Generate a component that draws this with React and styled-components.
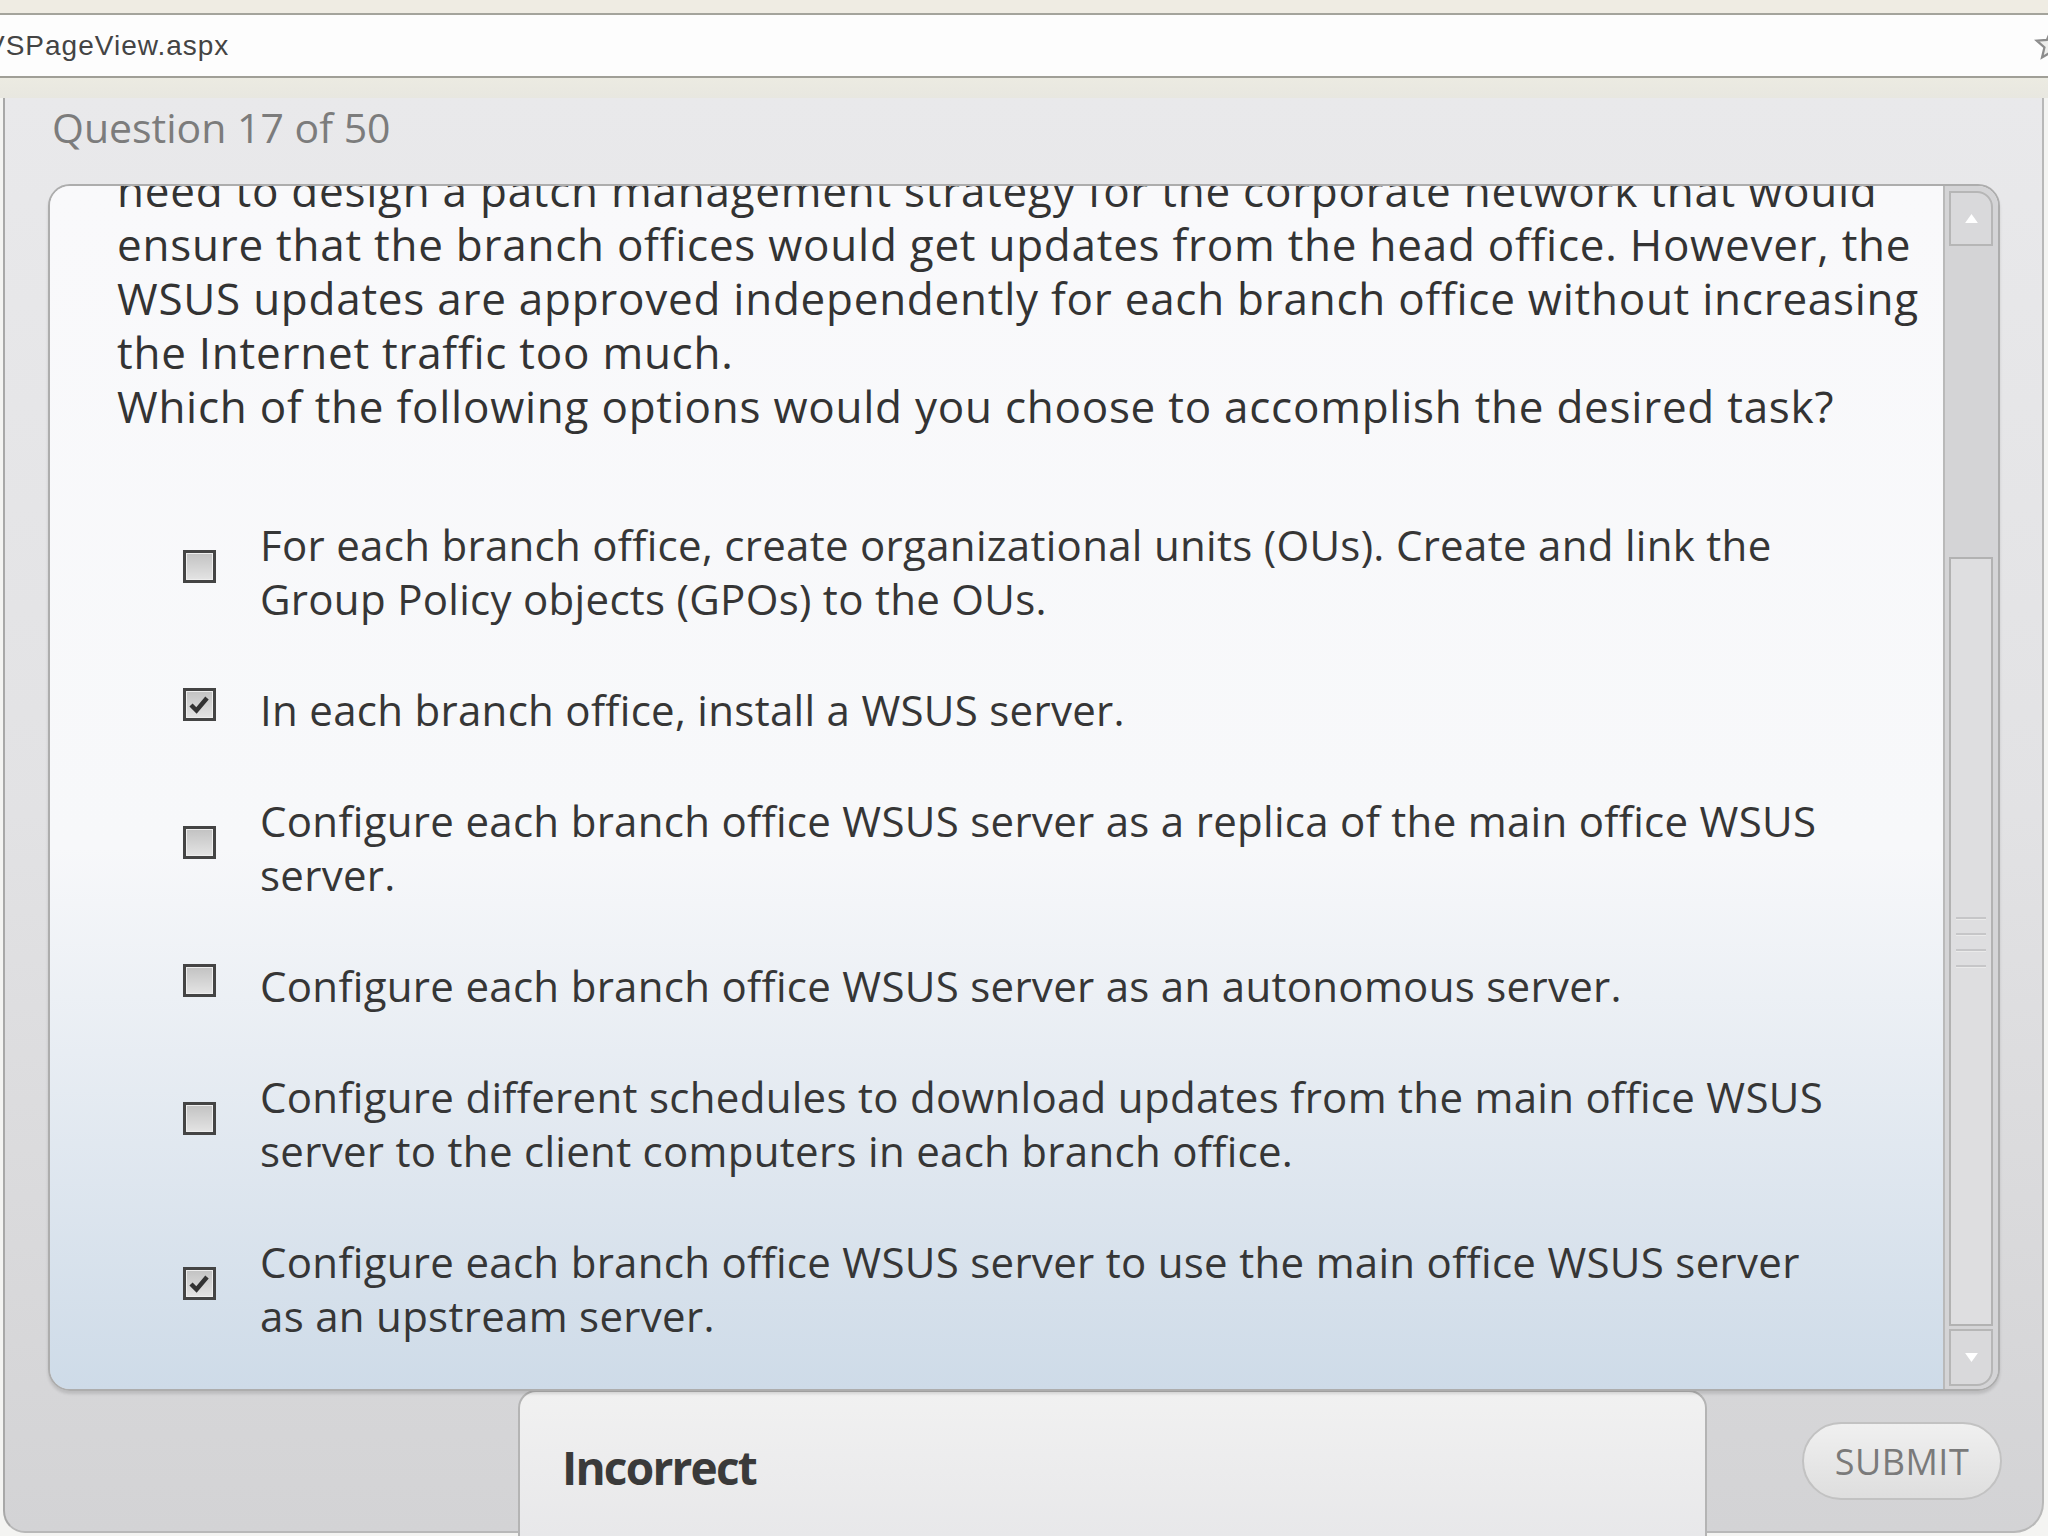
import styled, { createGlobalStyle } from "styled-components"

const GlobalStyle = createGlobalStyle`
  html, body {
    margin: 0;
    padding: 0;
    background: #efede5;
  }
  * {
    box-sizing: border-box;
  }
`

const questionLines = [
  "need to design a patch management strategy for the corporate network that would",
  "ensure that the branch offices would get updates from the head office. However, the",
  "WSUS updates are approved independently for each branch office without increasing",
  "the Internet traffic too much.",
  "Which of the following options would you choose to accomplish the desired task?",
]

const options = [
  { lines: ["For each branch office, create organizational units (OUs). Create and link the", "Group Policy objects (GPOs) to the OUs."], checked: false },
  { lines: ["In each branch office, install a WSUS server."], checked: true },
  { lines: ["Configure each branch office WSUS server as a replica of the main office WSUS", "server."], checked: false },
  { lines: ["Configure each branch office WSUS server as an autonomous server."], checked: false },
  { lines: ["Configure different schedules to download updates from the main office WSUS", "server to the client computers in each branch office."], checked: false },
  { lines: ["Configure each branch office WSUS server to use the main office WSUS server", "as an upstream server."], checked: true },
]

const App = () => {
  return (
    <>
      <GlobalStyle />
      <Page>
        <ChromeTop />
        <AddressBar>
          <Url>VSPageView.aspx</Url>
          <Star viewBox="0 0 30 28">
            <path d="M15 2 L18.6 10.4 L27.6 11 L20.8 17 L22.9 25.8 L15 21.1 L7.1 25.8 L9.2 17 L2.4 11 L11.4 10.4 Z" />
          </Star>
        </AddressBar>
        <ChromeStrip />
        <Panel>
          <Title>Question 17 of 50</Title>
          <QuestionBox>
            <Content>
              <Scrolled>
                <QuestionText>
                  {questionLines.map((l, i) => <Line key={i}>{l}</Line>)}
                </QuestionText>
                <OptionList>
                  {options.map((o, i) => (
                    <Option key={i}>
                      <Checkbox>
                        {o.checked && (
                          <svg viewBox="0 0 27 27" width="27" height="27">
                            <path d="M5 14 L10.5 19.5 L21 7" fill="none" stroke="#333" strokeWidth="4.5" />
                          </svg>
                        )}
                      </Checkbox>
                      <OptionText>
                        {o.lines.map((l, j) => <Line key={j}>{l}</Line>)}
                      </OptionText>
                    </Option>
                  ))}
                </OptionList>
              </Scrolled>
            </Content>
            <ScrollBar>
              <ArrowButton $top>
                <Arrow viewBox="0 0 16 12"><path d="M8 1 L15 11 L1 11 Z" /></Arrow>
              </ArrowButton>
              <Track $offset={311}>
                <Thumb>
                  <Grip />
                  <Grip />
                  <Grip />
                  <Grip />
                </Thumb>
              </Track>
              <ArrowButton>
                <Arrow viewBox="0 0 16 12"><path d="M1 1 L15 1 L8 11 Z" /></Arrow>
              </ArrowButton>
            </ScrollBar>
          </QuestionBox>
          <Footer>
            <Feedback>
              <FeedbackTitle>Incorrect</FeedbackTitle>
            </Feedback>
            <SubmitButton>SUBMIT</SubmitButton>
          </Footer>
        </Panel>
      </Page>
    </>
  )
}

const Page = styled.div`
  width: 2048px;
  height: 1536px;
  overflow: hidden;
  background: #f4f4f2;
  display: flex;
  flex-direction: column;
`

const ChromeTop = styled.div`
  height: 13px;
  background: #efece3;
  flex: none;
`

const AddressBar = styled.div`
  height: 65px;
  flex: none;
  background: #fdfdfd;
  border-top: 2px solid #a4a49c;
  border-bottom: 2px solid #a09f97;
  display: flex;
  align-items: center;
  overflow: hidden;
`

const Url = styled.span`
  font-family: "Liberation Sans", Arial, sans-serif;
  font-size: 28px;
  letter-spacing: 1px;
  color: #444;
  margin-left: -14px;
  flex: 1;
`

const Star = styled.svg`
  width: 34px;
  height: 32px;
  margin-right: -20px;
  margin-bottom: 4px;
  fill: #ededeb;
  stroke: #8c8c8c;
  stroke-width: 2;
`

const ChromeStrip = styled.div`
  height: 20px;
  flex: none;
  background: linear-gradient(#ecebe2, #e8e7e0);
`

const Panel = styled.div`
  margin-left: 3px;
  width: 2041px;
  height: 1435px;
  flex: none;
  border-left: 2px solid #a8a8a8;
  border-right: 2px solid #b8b8b8;
  border-bottom: 2px solid #b8b8b8;
  border-radius: 0 0 30px 22px;
  background: linear-gradient(#e9e9eb 0%, #e2e2e4 50%, #d3d3d5 100%);
  padding: 5px 0 0 43px;
  display: flex;
  flex-direction: column;
`

const Title = styled.div`
  font-family: "Open Sans", "Noto Sans", sans-serif;
  font-size: 41px;
  line-height: 48px;
  color: #7c7c7c;
  margin-left: 4px;
  flex: none;
`

const QuestionBox = styled.div`
  margin-top: 33px;
  width: 1952px;
  height: 1207px;
  flex: none;
  border: 2px solid #adadad;
  border-radius: 22px;
  display: flex;
  overflow: hidden;
  box-shadow: 0 3px 3px rgba(0, 0, 0, 0.12);
  position: relative;
  z-index: 1;
`

const Content = styled.div`
  flex: 1;
  overflow: hidden;
  padding-left: 67px;
  background: linear-gradient(#f9f9fb 0%, #f7f8fa 55%, #e8edf3 72%, #cedbe8 100%);
`

const Scrolled = styled.div`
  margin-top: -23px;
`

const QuestionText = styled.div`
  font-family: "Open Sans", "Noto Sans", sans-serif;
  font-size: 44px;
  line-height: 54px;
  letter-spacing: 0.75px;
  color: #333;
`

const Line = styled.div`
  white-space: nowrap;
`

const OptionList = styled.div`
  margin-top: 85px;
  margin-left: 66px;
  display: flex;
  flex-direction: column;
  gap: 57px;
`

const Option = styled.div`
  display: flex;
  align-items: center;
  gap: 44px;
`

const Checkbox = styled.div`
  width: 33px;
  height: 33px;
  flex: none;
  margin-bottom: 12px;
  border: 3px solid #444;
  background: linear-gradient(#c2c2c2, #e4e4e4);
  box-shadow: inset 0 0 0 1px #eee;
  display: flex;
`

const OptionText = styled.div`
  font-family: "Open Sans", "Noto Sans", sans-serif;
  font-size: 42px;
  line-height: 54px;
  letter-spacing: 0.3px;
  color: #363636;
`

const ScrollBar = styled.div`
  width: 55px;
  flex: none;
  border-left: 2px solid #b9b9b9;
  background: #d4d4d6;
  padding: 5px 5px 3px 4px;
  display: flex;
  flex-direction: column;
`

const ArrowButton = styled.div`
  height: ${p => (p.$top ? 55 : 57)}px;
  flex: none;
  border: 2px solid #b6b6b6;
  border-radius: ${p => (p.$top ? "0 16px 0 0" : "0 0 16px 0")};
  background: #d9d9db;
  display: flex;
  align-items: center;
  justify-content: center;
`

const Arrow = styled.svg`
  width: 15px;
  height: 11px;
  fill: #fff;
`

const Track = styled.div`
  flex: 1;
  display: flex;
  flex-direction: column;
  padding-top: ${p => p.$offset}px;
  padding-bottom: 3px;
`

const Thumb = styled.div`
  flex: 1;
  border: 2px solid #b2b2b2;
  background: #dedee0;
  display: flex;
  flex-direction: column;
  justify-content: center;
  align-items: center;
  gap: 14px;
`

const Grip = styled.div`
  width: 30px;
  height: 2px;
  background: #c6c6c8;
  box-shadow: 0 1px 0 #eaeaea;
`

const Footer = styled.div`
  display: flex;
  align-items: flex-start;
  padding-left: 470px;
  padding-right: 40px;
  flex: none;
`

const Feedback = styled.div`
  width: 1189px;
  height: 160px;
  flex: none;
  margin-top: -1px;
  border: 2px solid #b4b4b4;
  border-bottom: none;
  border-radius: 18px 18px 0 0;
  background: linear-gradient(#f1f1f1, #e7e7e9);
  padding: 47px 0 0 42px;
`

const FeedbackTitle = styled.div`
  font-family: "Open Sans", "Noto Sans", sans-serif;
  font-weight: 700;
  font-size: 46px;
  line-height: 56px;
  letter-spacing: -1.8px;
  color: #3a3a3a;
`

const SubmitButton = styled.div`
  margin-left: auto;
  margin-top: 31px;
  width: 200px;
  height: 78px;
  border: 2px solid #c2c2c2;
  border-radius: 39px;
  background: linear-gradient(#f0f0f0, #dedede);
  display: flex;
  align-items: center;
  justify-content: center;
  font-family: "Open Sans", "Noto Sans", sans-serif;
  font-size: 36px;
  color: #7a7a7a;
  letter-spacing: 0.5px;
`

export default App
